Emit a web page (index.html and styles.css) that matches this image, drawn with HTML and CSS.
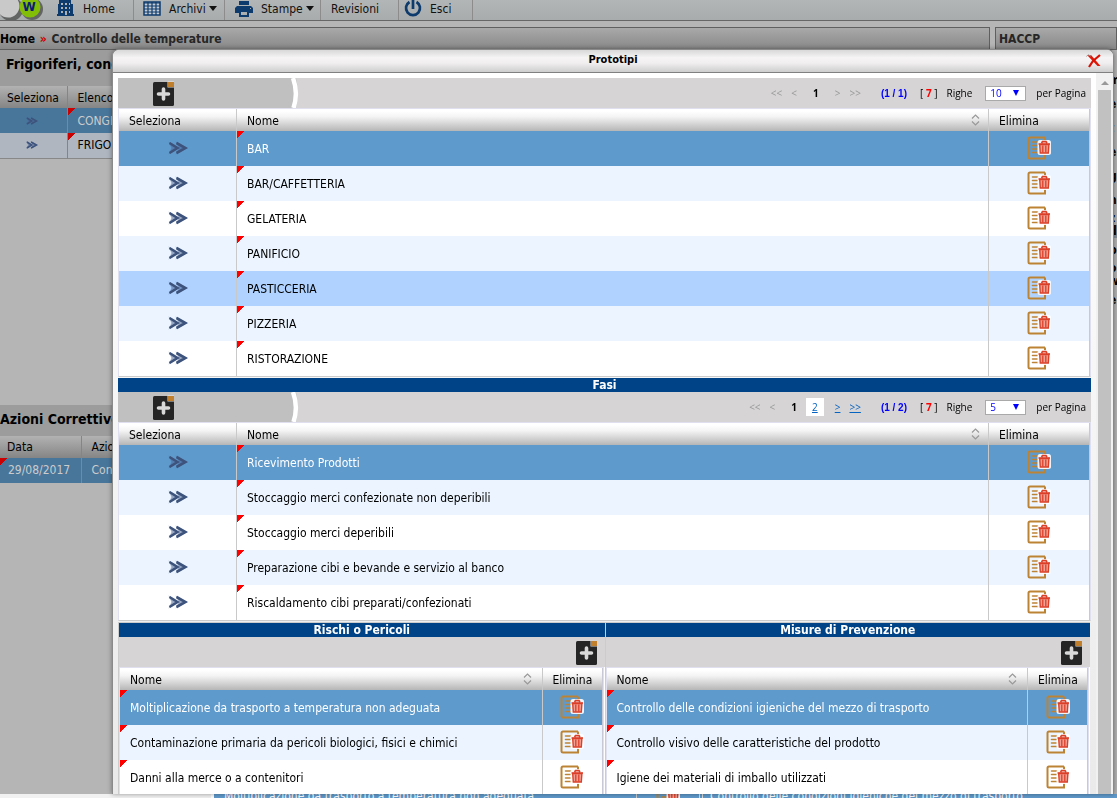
FILE: index.html
```html
<!DOCTYPE html>
<html lang="it">
<head>
<meta charset="utf-8">
<title>Controllo delle temperature</title>
<link rel="stylesheet" href="styles.css">
</head>
<body>
<svg class="defs" aria-hidden="true">
  <symbol id="arrows" viewBox="0 0 20 14">
    <path d="M0.500 0.500 L10.500 7 L0.500 13.500 L3.500 7 Z M7.500 0.500 L19.500 7 L7.500 13.500 L11 7 Z" fill="#4a6596" opacity=".55"/>
    <path d="M1.500 2 L9.500 7 L1.500 12 M8.500 2 L17.500 7 L8.500 12" fill="none" stroke="#3d537c" stroke-width="2.600"/>
  </symbol>
  <symbol id="trash" viewBox="0 0 24 24">
    <path d="M18 1.500 H3 Q1.500 1.500 1.500 3 V21 Q1.500 22.500 3 22.500 H18 V18 M18 1.500 V5" fill="none" stroke="#bd8335" stroke-width="2"/>
    <path d="M5.500 6 H12 M5.500 9.500 H10.500 M5.500 13 H10.500 M5.500 16.500 H12" stroke="#bd8335" stroke-width="1.600" stroke-linecap="round"/>
    <rect x="10.500" y="4" width="13.500" height="15" rx="2.500" fill="#fff" opacity=".9"/>
    <path d="M11.500 8 H23 M14.500 7 L15.500 5.700 H19 L20 7" fill="none" stroke="#dc3f28" stroke-width="1.700"/>
    <path d="M12.700 8.500 L13.300 17 H21.300 L21.900 8.500 Z" fill="#f2a093" stroke="#dc3f28" stroke-width="1.400"/>
    <path d="M15.800 9.500 V16.500 M18.800 9.500 V16.500" stroke="#dc3f28" stroke-width="1.300"/>
  </symbol>
  <symbol id="add" viewBox="0 0 22 25">
    <rect x="0" y="1" width="21" height="24" rx="1.500" fill="#252525"/>
    <rect x="14.500" y="0" width="6.500" height="6.500" fill="#d6d4d5"/>
    <rect x="15" y="1" width="6" height="5" fill="#bf7f2c"/>
    <path d="M10.500 8 V18 M5.500 13 H15.500" stroke="#d9d9d9" stroke-width="3.600" stroke-linecap="round"/>
  </symbol>
  <symbol id="sort" viewBox="0 0 9 12">
    <path d="M1 4.500 L4.500 1 L8 4.500 M1 7.500 L4.500 11 L8 7.500" fill="none" stroke="#999" stroke-width="1.200"/>
  </symbol>
  <symbol id="arc" viewBox="0 0 12 30">
    <path d="M0 0 H5 Q9 15 5 30 H0 Z" fill="#c0c0c0"/>
    <path d="M2 0 Q7.500 15 2.500 30" fill="none" stroke="#fff" stroke-width="4.500"/>
  </symbol>
</svg>

<div class="page">
  <nav class="menubar">
    <svg class="logo" viewBox="0 0 46 20" aria-label="W">
      <circle cx="11" cy="9" r="12" fill="#444" opacity=".7"/>
      <circle cx="32" cy="9" r="11" fill="#444" opacity=".7"/>
      <circle cx="8" cy="6" r="11.500" fill="#c9c9c9"/>
      <circle cx="30" cy="7" r="10.500" fill="#82bd08"/>
      <text x="29" y="11" text-anchor="middle" class="logo-text">W</text>
    </svg>
    <a class="menu home" href="#"><svg viewBox="0 0 18 17" width="18" height="17"><path fill="#0d3b6d" fill-rule="evenodd" d="M2 0H14V4H16V14H17V16H0V14H1V4H2ZM4 3V5H6V3ZM8 3V5H10V3ZM12 3V5H13V3ZM4 7V9H6V7ZM8 7V9H10V7ZM12 7V9H13V7ZM4 11V13H6V11ZM8 11V15H10V11ZM12 11V13H13V11Z"/></svg>Home</a>
    <a class="menu archivi" href="#"><svg viewBox="0 0 18 15" width="18" height="15"><path fill="#c4cbd2" stroke="#0d3b6d" stroke-width="1.500" d="M1 1H17V14H1Z"/><path fill="none" stroke="#0d3b6d" stroke-width="1.200" d="M1 2H17M1 5H17M1 8H17M1 11H17M5 1V14M9 1V14M13 1V14"/></svg>Archivi<i></i></a>
    <a class="menu stampe" href="#"><svg viewBox="0 0 18 16" width="18" height="16"><path fill="#0d3b6d" fill-rule="evenodd" d="M4 0H14V4H4ZM2 5H16L18 7V12H14V16H4V12H0V7ZM6 11V14H12V11ZM15 7V8H16V7Z"/></svg>Stampe<i></i></a>
    <a class="menu revisioni" href="#">Revisioni</a>
    <a class="menu esci" href="#"><svg viewBox="0 0 18 17" width="18" height="17"><path fill="none" stroke="#0d3b6d" stroke-width="2.700" d="M5.500 2A7 7 0 1 0 12.500 2M9 0V9"/></svg>Esci</a>
  </nav>
  <div class="crumbs">
    <div class="crumb-path"><a href="#">Home</a> <b>»</b> <span>Controllo delle temperature</span></div>
    <div class="crumb-area">HACCP</div>
  </div>
  <div class="workspace">
    <main class="behind">
      <h2 class="fridge-title">Frigoriferi, congelatori</h2>
      <table class="back-grid fridges">
        <tr><th>Seleziona</th><th>Elenco</th></tr>
        <tr class="picked"><td><svg class="go"><use href="#arrows"/></svg></td><td class="mark">CONGELATORE</td></tr>
        <tr class="plain"><td><svg class="go"><use href="#arrows"/></svg></td><td class="mark">FRIGORIFERO</td></tr>
      </table>
      <h2 class="fix-title">Azioni Correttive</h2>
      <table class="back-grid fixes">
        <tr><th>Data</th><th>Azione</th></tr>
        <tr class="picked"><td class="mark">29/08/2017</td><td>Controllo</td></tr>
      </table>
    </main>
    <aside class="notes"><p>m</p><p>e</p><p>t</p><p>e</p><p>g</p><p>n</p><p class="tight">z</p><p class="tight lit">d</p><p>b</p><p class="tight">o</p><p class="tight">w</p><p>e</p></aside>
  </div>
  <div class="remnant"><span></span><span class="cut">Moltiplicazione da trasporto a temperatura non adeguata</span><span class="cut-icon"><svg><use href="#trash"/></svg></span><span class="cut">Controllo delle condizioni igieniche del mezzo di trasporto</span></div>
</div>

<section class="dialog" role="dialog" aria-labelledby="dialog-title">
  <header class="titlebar">
    <h1 id="dialog-title">Prototipi</h1>
    <button class="close" aria-label="Chiudi"><svg viewBox="0 0 16 14"><path d="M1 1L5 1L14.500 12L11.500 12Z" fill="#e01808"/><path d="M14 1L7 7L3 13" fill="none" stroke="#d81204" stroke-width="2.200"/><path d="M0.500 2.500L2 0.800L5 2" fill="none" stroke="#999"/></svg></button>
  </header>
  <div class="scroller">
    <div class="content">
      <div class="toolbar">
        <div class="tab"><button class="add" aria-label="Aggiungi prototipo"><svg><use href="#add"/></svg></button></div><svg class="arc"><use href="#arc"/></svg>
        <div class="pager"><span class="off">&lt;&lt;</span><span class="off">&lt;</span><strong class="current">1</strong><span class="off next">&gt;</span><span class="off">&gt;&gt;</span><span class="pages">(1 / 1)</span><span class="total">[ <b>7</b> ]</span><label for="rows-a">Righe</label><span class="pick"><select id="rows-a"><option>10</option></select></span><span class="per">per Pagina</span></div>
      </div>
      <table class="grid main">
        <colgroup><col class="c-select"><col><col class="c-delete"></colgroup>
        <tr><th>Seleziona</th><th>Nome<svg class="sort"><use href="#sort"/></svg></th><th>Elimina</th></tr>
        <tr class="picked"><td><svg class="go"><use href="#arrows"/></svg></td><td class="mark">BAR</td><td><svg class="bin"><use href="#trash"/></svg></td></tr>
        <tr class="alt"><td><svg class="go"><use href="#arrows"/></svg></td><td class="mark">BAR/CAFFETTERIA</td><td><svg class="bin"><use href="#trash"/></svg></td></tr>
        <tr><td><svg class="go"><use href="#arrows"/></svg></td><td class="mark">GELATERIA</td><td><svg class="bin"><use href="#trash"/></svg></td></tr>
        <tr class="alt"><td><svg class="go"><use href="#arrows"/></svg></td><td class="mark">PANIFICIO</td><td><svg class="bin"><use href="#trash"/></svg></td></tr>
        <tr class="hovered"><td><svg class="go"><use href="#arrows"/></svg></td><td class="mark">PASTICCERIA</td><td><svg class="bin"><use href="#trash"/></svg></td></tr>
        <tr class="alt"><td><svg class="go"><use href="#arrows"/></svg></td><td class="mark">PIZZERIA</td><td><svg class="bin"><use href="#trash"/></svg></td></tr>
        <tr><td><svg class="go"><use href="#arrows"/></svg></td><td class="mark">RISTORAZIONE</td><td><svg class="bin"><use href="#trash"/></svg></td></tr>
      </table>
      <h2 class="band">Fasi</h2>
      <div class="toolbar">
        <div class="tab"><button class="add" aria-label="Aggiungi fase"><svg><use href="#add"/></svg></button></div><svg class="arc"><use href="#arc"/></svg>
        <div class="pager"><span class="off">&lt;&lt;</span><span class="off">&lt;</span><strong class="current">1</strong><a class="page-number" href="#">2</a><a class="next" href="#">&gt;</a><a href="#">&gt;&gt;</a><span class="pages">(1 / 2)</span><span class="total">[ <b>7</b> ]</span><label for="rows-b">Righe</label><span class="pick"><select id="rows-b"><option>5</option></select></span><span class="per">per Pagina</span></div>
      </div>
      <table class="grid main">
        <colgroup><col class="c-select"><col><col class="c-delete"></colgroup>
        <tr><th>Seleziona</th><th>Nome<svg class="sort"><use href="#sort"/></svg></th><th>Elimina</th></tr>
        <tr class="picked"><td><svg class="go"><use href="#arrows"/></svg></td><td class="mark">Ricevimento Prodotti</td><td><svg class="bin"><use href="#trash"/></svg></td></tr>
        <tr class="alt"><td><svg class="go"><use href="#arrows"/></svg></td><td class="mark">Stoccaggio merci confezionate non deperibili</td><td><svg class="bin"><use href="#trash"/></svg></td></tr>
        <tr><td><svg class="go"><use href="#arrows"/></svg></td><td class="mark">Stoccaggio merci deperibili</td><td><svg class="bin"><use href="#trash"/></svg></td></tr>
        <tr class="alt"><td><svg class="go"><use href="#arrows"/></svg></td><td class="mark">Preparazione cibi e bevande e servizio al banco</td><td><svg class="bin"><use href="#trash"/></svg></td></tr>
        <tr><td><svg class="go"><use href="#arrows"/></svg></td><td class="mark">Riscaldamento cibi preparati/confezionati</td><td><svg class="bin"><use href="#trash"/></svg></td></tr>
      </table>
      <div class="halves">
        <section>
          <h2 class="band">Rischi o Pericoli</h2>
          <div class="toolbar end"><button class="add" aria-label="Aggiungi rischio"><svg><use href="#add"/></svg></button></div>
          <table class="grid small">
            <colgroup><col><col class="c-delete"></colgroup>
            <tr><th>Nome<svg class="sort"><use href="#sort"/></svg></th><th>Elimina</th></tr>
            <tr class="picked"><td class="mark">Moltiplicazione da trasporto a temperatura non adeguata</td><td><svg class="bin"><use href="#trash"/></svg></td></tr>
            <tr class="alt"><td class="mark">Contaminazione primaria da pericoli biologici, fisici e chimici</td><td><svg class="bin"><use href="#trash"/></svg></td></tr>
            <tr><td class="mark">Danni alla merce o a contenitori</td><td><svg class="bin"><use href="#trash"/></svg></td></tr>
          </table>
        </section>
        <section>
          <h2 class="band">Misure di Prevenzione</h2>
          <div class="toolbar end"><button class="add" aria-label="Aggiungi misura"><svg><use href="#add"/></svg></button></div>
          <table class="grid small">
            <colgroup><col><col class="c-delete"></colgroup>
            <tr><th>Nome<svg class="sort"><use href="#sort"/></svg></th><th>Elimina</th></tr>
            <tr class="picked"><td class="mark">Controllo delle condizioni igieniche del mezzo di trasporto</td><td><svg class="bin"><use href="#trash"/></svg></td></tr>
            <tr class="alt"><td class="mark">Controllo visivo delle caratteristiche del prodotto</td><td><svg class="bin"><use href="#trash"/></svg></td></tr>
            <tr><td class="mark">Igiene dei materiali di imballo utilizzati</td><td><svg class="bin"><use href="#trash"/></svg></td></tr>
          </table>
        </section>
      </div>
    </div>
    <div class="scrollbar"><i></i><span></span></div>
  </div>
</section>
</body>
</html>
```
FILE: styles.css
```css
* { box-sizing: border-box; }
html, body { height: 100%; }
body {
  margin: 0;
  overflow: hidden;
  font-family: "DejaVu Sans Condensed", "Open Sans", sans-serif;
  font-size: 12px;
  color: #000;
}
h1, h2, p { margin: 0; }
button { padding: 0; border: 0; background: none; }
svg { display: block; }
.defs { position: absolute; width: 0; height: 0; }

/* page under the dialog */
.page { height: 100vh; display: flex; flex-direction: column; background: #b5b5b5; }
.menubar {
  flex: none;
  display: flex;
  height: 21px;
  background: linear-gradient(#b3b6b6, #a9acac);
  border-bottom: 1px solid #666;
}
.logo { width: 46px; height: 20px; }
.logo-text { font: bold 12px "DejaVu Sans", sans-serif; fill: #0b1c78; }
.menu {
  display: flex;
  align-items: center;
  gap: 8px;
  height: 20px;
  padding-bottom: 3px;
  border-right: 1px solid #8c8c8c;
  color: #111;
  text-decoration: none;
}
.menu i { border: 4px solid transparent; border-top: 5px solid #111; border-bottom: 0; margin-left: -5px; }
.home { width: 88px; padding-left: 11px; }
.archivi { width: 91px; padding-left: 9px; }
.stampe { width: 96px; padding-left: 10px; }
.revisioni { width: 78px; padding-left: 10px; }
.esci { width: 74px; padding-left: 5px; }
.crumbs {
  flex: none;
  display: flex;
  gap: 5px;
  margin-top: 6px;
  height: 23px;
  font-size: 12px;
  font-weight: bold;
  line-height: 22px;
  color: #262626;
}
.crumbs > div { border: 1px solid #5f5f5f; background: linear-gradient(#a9a9a9, #888); }
.crumbs > .crumb-path { flex: 1; border-left: 0; }
.crumb-path a { color: #000; text-decoration: none; }
.crumb-path b { color: #c00; margin: 0 1px; }
.crumb-area { width: 122px; padding-left: 3px; }
.workspace { flex: 1; min-height: 0; display: flex; }
.behind { flex: 1; }
.behind h2 { background: #9c9c9c; font-size: 14px; white-space: nowrap; }
.fridge-title { height: 36px; line-height: 29px; padding-left: 6px; }
.fix-title { height: 31px; line-height: 28px; margin-top: 246px; }
.back-grid { width: 100%; table-layout: fixed; border-collapse: collapse; }
.back-grid th {
  height: 22px;
  padding: 1px 0 0 7px;
  text-align: left;
  font-weight: normal;
  background: linear-gradient(#b2b2b2, #858585);
}
.back-grid td { height: 25px; padding: 0 0 0 8px; }
.back-grid th + th, .back-grid td + td { border-left: 1px solid #858585; padding-left: 10px; }
.back-grid th:first-child { width: 67px; }
.fixes th:first-child { width: 81px; }
.back-grid .picked { background-color: #48769b; color: #ccc; }
.back-grid .plain { background-color: #afb6c0; border-bottom: 1px solid #888; }
.back-grid .go { width: 12px; height: 10px; margin-left: 18px; }
.notes { width: 5px; padding-top: 18px; font-size: 12px; font-weight: bold; overflow: hidden; }
.notes p { height: 24px; line-height: 24px; margin-left: -3px; }
.notes .tight { height: 13px; line-height: 13px; }
.notes .lit { background: #87929d; }
.remnant {
  flex: none;
  height: 4px;
  overflow: hidden;
  display: grid;
  grid-template-columns: 214px 422px 67px 1fr;
  background: #5f9acc;
  color: #fff;
}
.remnant span:first-child { background: #f1f1f1; border-right: 3px solid #fff; }
.remnant span { height: 4px; overflow: hidden; display: flex; align-items: center; }
.cut { padding-left: 10px; white-space: nowrap; }
.remnant .cut:last-child { padding-left: 7px; }
.cut-icon { border-left: 1px solid #ccc; border-right: 4px double #ddd; justify-content: center; }
.cut-icon svg { width: 24px; height: 24px; flex: none; }

/* dialog */
.dialog {
  position: fixed;
  inset: 49px 3px 4px 112px;
  display: flex;
  flex-direction: column;
  border: 1px solid #8a8a8a;
  border-bottom: 0;
  border-radius: 7px 7px 0 0;
  background: linear-gradient(#fff 40px, #eaeaea);
  overflow: hidden;
  box-shadow: 0 0 5px rgba(0, 0, 0, .4);
}
.titlebar {
  flex: none;
  height: 23px;
  display: grid;
  grid-template-columns: 1fr 30px;
  align-items: center;
  background: linear-gradient(#d8d8d8, #f6f4f4 35%, #f0eeee 60%, #cecece);
  border-bottom: 1px solid #808080;
}
.titlebar h1 { font-size: 11px; line-height: 20px; padding-bottom: 2px; text-align: center; padding-left: 30px; }
.close svg { width: 16px; height: 14px; margin-left: 3px; }
.scroller { flex: 1; min-height: 0; display: flex; }
.content { flex: 1; padding: 5px 5px 0; overflow: hidden; }
.scrollbar { width: 17px; background: #f1f1f1; padding: 8px 2px 0; display: flex; flex-direction: column; }
.scrollbar i { align-self: center; border: 4px solid transparent; border-top: 0; border-bottom: 4px solid #999; margin-bottom: 5px; }
.scrollbar span { flex: 1; background: #c1c1c1; }

.toolbar { display: flex; align-items: center; height: 30px; background: #d6d4d5; }
.toolbar.end { justify-content: flex-end; padding-right: 7px; }
.tab { width: 173px; height: 30px; padding: 3px 0 0 35px; background: #c0c0c0; }
.add svg { width: 22px; height: 25px; }
.arc { width: 12px; height: 30px; }
.pager {
  margin-left: auto;
  padding-right: 5px;
  display: flex;
  align-items: center;
  font: 10px "Open Sans", "Noto Sans", sans-serif;
}
.pager > * { margin-left: 9px; }
.pager a { color: #0563c1; }
.pager .off { color: #999; }
.pager .current { margin: 0 7px 0 16px; }
.pager .page-number { background: #fff; padding: 2px 6px; margin: 0 2px; }
.pager .pages { margin-left: 20px; color: #00f; font: bold 10px "Liberation Sans", sans-serif; }
.pager .total { margin-left: 13px; }
.total b { color: #f00; }
.pick { position: relative; display: flex; }
.pager .pick { margin-left: 13px; }
.pick::after {
  content: "";
  position: absolute;
  right: 7px;
  top: 4px;
  border: 3px solid transparent;
  border-top: 6px solid #00f;
  border-bottom: 0;
}
.pick select {
  appearance: none;
  width: 41px;
  height: 15px;
  padding: 0 4px;
  border: 1px solid #a9a9a9;
  border-radius: 0;
  background: #fff;
  color: #00f;
  font: 10px/13px "Open Sans", sans-serif;
}
.pager .per { margin-left: 10px; }

.grid { width: 100%; table-layout: fixed; border-collapse: separate; border-spacing: 0; border: 1px solid #dfdff0; background: #fff; }
.grid th {
  height: 22px;
  padding: 2px 10px 0;
  text-align: left;
  font-weight: normal;
  background: linear-gradient(#fff 10%, #f4f4f4 35%, #b6b6b6);
}
.grid td { height: 35px; padding: 0 10px; white-space: nowrap; }
.grid th + th, .grid td + td { border-left: 1px solid #c9c9c9; }
.grid th:last-child, .grid td:last-child { border-right: 1px solid #c9c9d6; }
.grid th:last-child { padding-right: 0; }
.grid .picked { background-color: #5f9acc; color: #fff; }
.grid .alt { background-color: #ecf5ff; }
.grid .hovered { background-color: #b0d2ff; }
.grid td:has(.go), .grid td:has(.bin) { padding-bottom: 2px; }
.grid .go { width: 20px; height: 14px; margin: 0 auto; }
.grid .bin { width: 24px; height: 24px; margin: 0 auto; }
.main { border-bottom-color: #ccc; margin-bottom: 1px; }
.c-select { width: 117px; }
.main .c-delete { width: 102px; }
.small .c-delete { width: 61px; }
.sort { float: right; width: 9px; height: 12px; }
.main .sort { margin-right: -2px; }
.mark {
  background-image: linear-gradient(to bottom right, #f00 50%, transparent 50%);
  background-size: 7px 8px;
  background-repeat: no-repeat;
}
.back-grid .mark { background-image: linear-gradient(to bottom right, #c00 50%, transparent 50%); }
.band { height: 14px; line-height: 15px; font-size: 12px; text-align: center; color: #fff; background: #004387; }
.halves {
  display: grid;
  grid-template-columns: 1fr 1fr;
  margin: 1px 1px 0 0;
  border-top: 1px solid #ccc;
  border-left: 1px solid #ccc;
}
.halves section { padding-right: 1px; background: linear-gradient(#004387 14px, #d6d4d5 14px, #d6d4d5 44px, #fff 44px); }
.halves .band, .halves .toolbar { margin-right: -1px; }
.halves section + section { border-left: 1px solid #ccc; }
```
